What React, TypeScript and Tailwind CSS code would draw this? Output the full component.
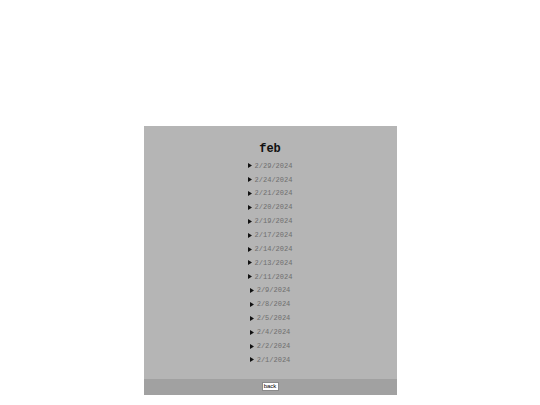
import React from "react";

const days = [
  "2/29/2024",
  "2/24/2024",
  "2/21/2024",
  "2/20/2024",
  "2/19/2024",
  "2/17/2024",
  "2/14/2024",
  "2/13/2024",
  "2/11/2024",
  "2/9/2024",
  "2/8/2024",
  "2/5/2024",
  "2/4/2024",
  "2/2/2024",
  "2/1/2024",
];

function Caret() {
  return (
    <svg width="4" height="5" viewBox="0 0 4 5" className="shrink-0">
      <path d="M0 0 L4 2.5 L0 5 Z" fill="#111" />
    </svg>
  );
}

export default function App() {
  return (
    <div className="min-h-[405px] w-full bg-white pt-[126px]">
      <div className="mx-auto flex w-[253px] flex-col bg-[#b5b5b5]">
        {/* Month heading */}
        <h1 className="pt-[17px] text-center font-['Courier_New','Liberation_Mono',monospace] text-[12px] font-bold leading-[12px] text-[#111]">
          feb
        </h1>

        {/* Day list */}
        <div className="mt-1 flex flex-col items-center pb-[12px]">
          {days.map((day) => (
            <div
              key={day}
              className="flex h-[13.86px] items-center gap-[3px] font-['Courier_New','Liberation_Mono',monospace] text-[7px] text-[#6e6e6e]"
            >
              <Caret />
              <span>{day}</span>
            </div>
          ))}
        </div>

        {/* Footer */}
        <div className="flex h-4 items-center justify-center bg-[#a1a1a1]">
          <button className="h-[9px] w-[17px] border border-[#8a8a8a] bg-white font-['Liberation_Sans',sans-serif] text-[6px] leading-[7px] text-black">
            back
          </button>
        </div>
      </div>
    </div>
  );
}
